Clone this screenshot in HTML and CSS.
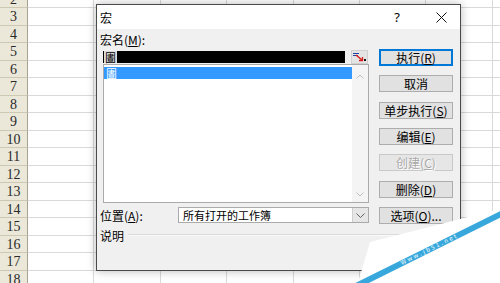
FILE: index.html
```
<html>
  <head>
    <meta http-equiv="Content-Type" content="text/html; charset=UTF-8" />
    <title>宏</title>
    <link rel="stylesheet" href="styles.css">
  </head>
  <body>
  <div class="sheet">
    <div class="row"><div class="rh">2</div><div class="c"></div><div class="c"></div><div class="c"></div><div class="c"></div><div class="c"></div><div class="c"></div><div class="c"></div><div class="c"></div></div>
    <div class="row"><div class="rh">3</div><div class="c"></div><div class="c"></div><div class="c"></div><div class="c"></div><div class="c"></div><div class="c"></div><div class="c"></div><div class="c"></div></div>
    <div class="row"><div class="rh">4</div><div class="c"></div><div class="c"></div><div class="c"></div><div class="c"></div><div class="c"></div><div class="c"></div><div class="c"></div><div class="c"></div></div>
    <div class="row"><div class="rh">5</div><div class="c"></div><div class="c"></div><div class="c"></div><div class="c"></div><div class="c"></div><div class="c"></div><div class="c"></div><div class="c"></div></div>
    <div class="row"><div class="rh">6</div><div class="c"></div><div class="c"></div><div class="c"></div><div class="c"></div><div class="c"></div><div class="c"></div><div class="c"></div><div class="c"></div></div>
    <div class="row"><div class="rh">7</div><div class="c"></div><div class="c"></div><div class="c"></div><div class="c"></div><div class="c"></div><div class="c"></div><div class="c"></div><div class="c"></div></div>
    <div class="row"><div class="rh">8</div><div class="c"></div><div class="c"></div><div class="c"></div><div class="c"></div><div class="c"></div><div class="c"></div><div class="c"></div><div class="c"></div></div>
    <div class="row"><div class="rh">9</div><div class="c"></div><div class="c"></div><div class="c"></div><div class="c"></div><div class="c"></div><div class="c"></div><div class="c"></div><div class="c"></div></div>
    <div class="row"><div class="rh">10</div><div class="c"></div><div class="c"></div><div class="c"></div><div class="c"></div><div class="c"></div><div class="c"></div><div class="c"></div><div class="c"></div></div>
    <div class="row"><div class="rh">11</div><div class="c"></div><div class="c"></div><div class="c"></div><div class="c"></div><div class="c"></div><div class="c"></div><div class="c"></div><div class="c"></div></div>
    <div class="row"><div class="rh">12</div><div class="c"></div><div class="c"></div><div class="c"></div><div class="c"></div><div class="c"></div><div class="c"></div><div class="c"></div><div class="c"></div></div>
    <div class="row"><div class="rh">13</div><div class="c"></div><div class="c"></div><div class="c"></div><div class="c"></div><div class="c"></div><div class="c"></div><div class="c"></div><div class="c"></div></div>
    <div class="row"><div class="rh">14</div><div class="c"></div><div class="c"></div><div class="c"></div><div class="c"></div><div class="c"></div><div class="c"></div><div class="c"></div><div class="c"></div></div>
    <div class="row"><div class="rh">15</div><div class="c"></div><div class="c"></div><div class="c"></div><div class="c"></div><div class="c"></div><div class="c"></div><div class="c"></div><div class="c"></div></div>
    <div class="row"><div class="rh">16</div><div class="c"></div><div class="c"></div><div class="c"></div><div class="c"></div><div class="c"></div><div class="c"></div><div class="c"></div><div class="c"></div></div>
    <div class="row"><div class="rh">17</div><div class="c"></div><div class="c"></div><div class="c"></div><div class="c"></div><div class="c"></div><div class="c"></div><div class="c"></div><div class="c"></div></div>
    <div class="row"><div class="rh">18</div><div class="c"></div><div class="c"></div><div class="c"></div><div class="c"></div><div class="c"></div><div class="c"></div><div class="c"></div><div class="c"></div></div>
  </div>

  <div class="dialog">
    <div class="titlebar">
      <span class="title">宏</span>
      <span class="tb-help">?</span>
      <span class="tb-close">
        <svg width="11" height="11" viewBox="0 0 11 11"><path d="M0.5 0.5L10.5 10.5M10.5 0.5L0.5 10.5" stroke="#111" stroke-width="1" fill="none"/></svg>
      </span>
    </div>
    <div class="dlg-body">
      <div class="top">
        <div class="main">
          <div class="lbl">宏名(<u>M</u>):</div>
          <div class="name-row">
            <div class="name-input"><span class="name-glyph">圕</span></div>
            <div class="refbtn">
              <svg width="15" height="12" viewBox="0 0 15 12">
                <rect x="1" y="2" width="6" height="1" fill="#1f3f9f"/>
                <rect x="1" y="4" width="5" height="1" fill="#1f3f9f"/>
                <path d="M4 4L10 9" stroke="#d81e1e" stroke-width="1.5"/>
                <path d="M7 9.5L10.5 9.5L10.5 6" stroke="#d81e1e" stroke-width="1.3" fill="none"/>
                <rect x="12" y="8" width="2" height="2" fill="#111"/>
              </svg>
            </div>
          </div>
          <div class="list">
            <div class="items"><div class="item sel">圕</div></div>
            <div class="vscroll">
              <svg width="8" height="5" viewBox="0 0 8 5"><path d="M0.5 4.5L4 1L7.5 4.5" stroke="#bfbfbf" fill="none"/></svg>
              <svg width="8" height="5" viewBox="0 0 8 5"><path d="M0.5 0.5L4 4L7.5 0.5" stroke="#bfbfbf" fill="none"/></svg>
            </div>
          </div>
          <div class="loc-row">
            <span class="loc-lbl">位置(<u>A</u>):</span>
            <div class="combo">
              <span class="combo-text">所有打开的工作簿</span>
              <span class="combo-btn">
                <svg width="9" height="5" viewBox="0 0 9 5"><path d="M0.5 0.5L4.5 4.5L8.5 0.5" stroke="#606060" fill="none"/></svg>
              </span>
            </div>
          </div>
        </div>
        <div class="buttons">
          <button class="btn default">执行(<u>R</u>)</button>
          <button class="btn">取消</button>
          <button class="btn">单步执行(<u>S</u>)</button>
          <button class="btn">编辑(<u>E</u>)</button>
          <button class="btn disabled">创建(<u>C</u>)</button>
          <button class="btn">删除(<u>D</u>)</button>
          <button class="btn">选项(<u>O</u>)...</button>
        </div>
      </div>
      <div class="desc"><span>说明</span><span class="rule"></span></div>
    </div>
  </div>

  <svg class="watermark" width="150" height="83" viewBox="0 0 150 83">
    <polygon points="20,42 150,9 150,83 8,83" fill="#fff"/>
    <line x1="153" y1="13" x2="6" y2="86" stroke="#38a8dc" stroke-width="6"/>
    <text x="52" y="65" transform="rotate(-26.4 52 65)" fill="#fff" font-size="6" letter-spacing="2">Www.jb51.net</text>
  </svg>
  </body>
</html>
```

FILE: styles.css
```
* {
  box-sizing: border-box;
}
body {
  margin: 0;
  width: 500px;
  height: 283px;
  overflow: hidden;
  position: relative;
  background: #fff;
  font-family: "Noto Sans CJK SC", "Noto Sans", sans-serif;
  font-size: 12px;
  color: #000;
}
u {
  text-decoration: underline;
}

/* spreadsheet behind the dialog */
.sheet {
  margin-top: -9.5px;
}
.row {
  display: flex;
  height: 17.5px;
}
.rh {
  width: 28px;
  flex: none;
  background: #ebe8d9;
  border-right: 1px solid #a8a390;
  border-bottom: 1px solid #cdc8b3;
  font-family: "Liberation Serif", serif;
  font-size: 14px;
  line-height: 17px;
  text-align: center;
  color: #2a2a2a;
}
.c {
  width: 66.4px;
  flex: none;
  border-right: 1px solid #d9d9d9;
  border-bottom: 1px solid #d9d9d9;
}

/* macro dialog */
.dialog {
  position: absolute;
  left: 96px;
  top: 4px;
  width: 365px;
  height: 267px;
  border: 1px solid #4a4a4a;
  background: #f0f0f0;
  box-shadow: 0 0 9px rgba(0,0,0,0.28);
  display: flex;
  flex-direction: column;
}
.titlebar {
  height: 24px;
  background: #fff;
  display: flex;
  align-items: center;
  padding-left: 3px;
}
.title {
  flex: 1;
}
.tb-help {
  width: 30px;
  text-align: center;
  margin-right: 10px;
  font-family: "Noto Sans", sans-serif;
  font-size: 13px;
}
.tb-close {
  width: 38px;
  display: flex;
  justify-content: center;
}
.dlg-body {
  flex: 1;
  display: flex;
  flex-direction: column;
  padding: 4px 0 0 3px;
}
.top {
  display: grid;
  grid-template-columns: 269px 74px;
  column-gap: 10px;
}
.main {
  display: flex;
  flex-direction: column;
}
.lbl {
  height: 14px;
  line-height: 14px;
}
.name-row {
  display: flex;
  align-items: center;
  height: 14px;
  margin: 3px 0 0 3px;
}
.name-input {
  width: 242px;
  height: 12px;
  background: #000;
  display: flex;
}
.name-glyph {
  background: #dcdcdc;
  font-size: 11px;
  line-height: 12px;
  padding: 0 1px;
  margin-left: 1px;
}
.refbtn {
  margin-left: 6px;
  width: 17px;
  height: 14px;
  background: #e4e4e4;
  border: 1px solid #d0d0d0;
  display: flex;
  align-items: center;
  justify-content: center;
}
.list {
  margin-left: 3px;
  width: 266px;
  height: 139px;
  border: 1px solid #aaa;
  background: #fff;
  display: flex;
}
.items {
  flex: 1;
  padding-top: 2px;
}
.item {
  height: 12px;
  line-height: 12px;
  font-size: 11px;
  padding-left: 2px;
}
.item.sel {
  background: #3399ff;
  color: #fff;
}
.vscroll {
  width: 16px;
  background: #f4f4f4;
  display: flex;
  flex-direction: column;
  justify-content: space-between;
  align-items: center;
  padding: 9px 0 5px;
}
.loc-row {
  display: flex;
  align-items: center;
  height: 16px;
  margin-top: 4px;
}
.loc-lbl {
  width: 78px;
}
.combo {
  width: 191px;
  height: 16px;
  background: #fff;
  border: 1px solid #aaa;
  display: flex;
}
.combo-text {
  flex: 1;
  padding-left: 4px;
  font-size: 11px;
  line-height: 14px;
}
.combo-btn {
  width: 16px;
  background: #e6e6e6;
  border-left: 1px solid #cfcfcf;
  display: flex;
  align-items: center;
  justify-content: center;
}
.buttons {
  display: flex;
  flex-direction: column;
  gap: 9.33px;
  padding-top: 16px;
}
.btn {
  height: 17px;
  padding: 0;
  border: 1px solid #adadad;
  background: #e1e1e1;
  font-family: inherit;
  font-size: 12px;
  line-height: 15px;
  color: #000;
}
.btn.default {
  border-color: #0078d7;
  box-shadow: inset 0 0 0 1px #0078d7;
}
.btn.disabled {
  color: #a9a9a9;
  background: #e6e6e6;
  border-color: #c9c9c9;
  text-shadow: 1px 1px 0 #fff;
}
.desc {
  display: flex;
  align-items: center;
  height: 13px;
  margin-top: 5px;
}
.rule {
  flex: 1;
  height: 2px;
  margin-left: 4px;
  border-top: 1px solid #dadada;
  border-bottom: 1px solid #fafafa;
}

/* site watermark over the corner */
.watermark {
  position: absolute;
  left: 350px;
  top: 200px;
}
```
